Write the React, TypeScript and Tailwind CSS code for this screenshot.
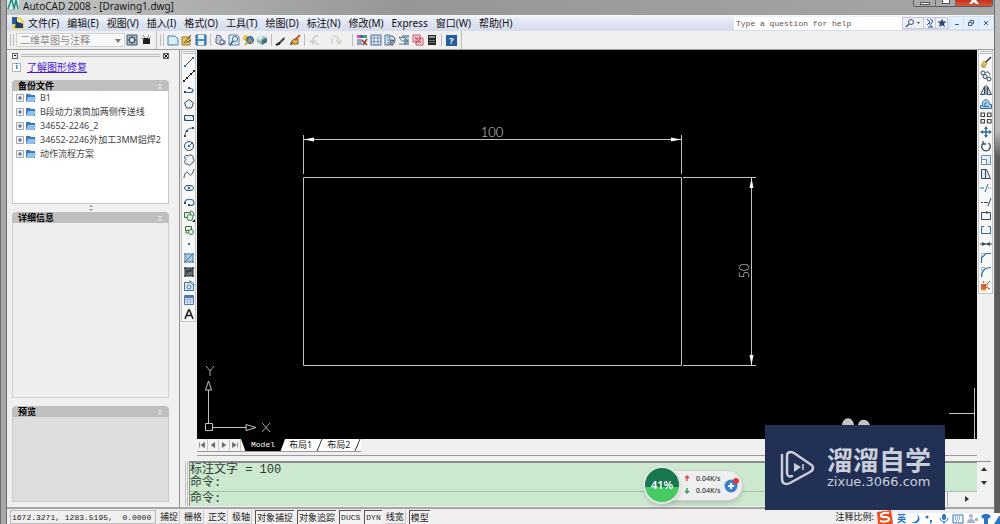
import type { ReactNode } from 'react'

type Tool = { name: string; icon: ReactNode }

const blue = '#2f6d9e'
const navy = '#34495e'

const menus = [
  '文件(F)',
  '编辑(E)',
  '视图(V)',
  '插入(I)',
  '格式(O)',
  '工具(T)',
  '绘图(D)',
  '标注(N)',
  '修改(M)',
  'Express',
  '窗口(W)',
  '帮助(H)',
]

const backups = ['B1', 'B段动力滚筒加两侧传送线', '34652-2246_2', '34652-2246外加工3MM鋁焊2', '动作流程方案']

const modes = [
  { label: '捕捉', on: false },
  { label: '栅格', on: false },
  { label: '正交', on: false },
  { label: '极轴', on: false },
  { label: '对象捕捉', on: true },
  { label: '对象追踪', on: true },
  { label: 'DUCS', on: true },
  { label: 'DYN', on: true },
  { label: '线宽', on: false },
  { label: '模型', on: true },
]

const fileTools: Tool[] = [
  {
    name: 'New',
    icon: <path d="M1 2h7l3 3v6H1z" fill="#d9ecf8" stroke="#4d86ad" />,
  },
  {
    name: 'Open',
    icon: (
      <>
        <path d="M1 3h8v8H1z" fill="#e8c766" stroke="#9b7a2c" />
        <path d="M3 9l7-8M5 9l5-3" stroke="#5b4a20" />
      </>
    ),
  },
  {
    name: 'Save',
    icon: (
      <>
        <path d="M1 1h10v10H1z" fill="#4f8fc4" stroke="#2d618f" />
        <path d="M3 1h6v4H3zM3 7h6v4H3z" fill="#e8f2fa" />
      </>
    ),
  },
]

const printTools: Tool[] = [
  {
    name: 'Plot',
    icon: (
      <>
        <path d="M3 1l4 1v3l4 2v3l-4 1-5-2V5z" fill="#c9cfda" stroke="#5f6f8c" />
        <circle cx="8" cy="8" r="2" fill="#fff" stroke="#4b628c" />
      </>
    ),
  },
  {
    name: 'Plot Preview',
    icon: (
      <>
        <path d="M1 1h8l2 2v8H1z" fill="#dcebf6" stroke="#5b84a5" />
        <circle cx="7" cy="5" r="2.5" fill="#fff" stroke="#35608a" />
        <path d="M5 7l-3 4" stroke="#35608a" strokeWidth="1.5" />
      </>
    ),
  },
  {
    name: 'Publish',
    icon: (
      <>
        <circle cx="4" cy="4" r="3" fill="#edc53c" />
        <circle cx="8" cy="6" r="3.5" fill="#4c89c7" stroke="#275584" />
        <path d="M3 11l5-5 2 3" stroke="#c69121" strokeWidth="1.5" />
      </>
    ),
  },
  {
    name: '3D DWF',
    icon: (
      <>
        <path d="M6 1l5 3v4l-5 3-5-3V4z" fill="#8fb7ae" />
        <path d="M6 6l5-2v4l-5 3z" fill="#3f7280" />
        <path d="M1 4l5-3 2 1-4 5z" fill="#d9e7ee" />
      </>
    ),
  },
]

const editTools: Tool[] = [
  {
    name: 'Match Properties',
    icon: (
      <>
        <path d="M2 10l7-7 1 2-6 6z" fill="#4d4d42" />
        <path d="M1 11l4-2" stroke="#222" strokeWidth="2" />
      </>
    ),
  },
  {
    name: 'Block Editor',
    icon: (
      <>
        <path d="M5 5h4v5H2V8z" fill="#e4b544" stroke="#806126" />
        <path d="M6 6l5-5" stroke="#c4572b" strokeWidth="2" />
        <path d="M1 11l3-3" stroke="#3d3d3d" />
      </>
    ),
  },
]

const undoTools: Tool[] = [
  {
    name: 'Undo',
    icon: <path d="M9 2C6 1 4 3 4 8M1 6l3 4 3-4M7 10h3" stroke="#cfcec2" strokeWidth="1.5" />,
  },
  {
    name: 'Redo',
    icon: <path d="M2 2c4 0 6 2 6 6M5 6l3 4 3-4M1 4v6" stroke="#d3d2c8" strokeWidth="1.5" />,
  },
]

const paletteTools: Tool[] = [
  {
    name: 'Properties',
    icon: (
      <>
        <path d="M1 1h3v3H1z" fill="#d64fa8" />
        <path d="M4 1h3v3H4z" fill="#4262c9" />
        <path d="M7 1h4v3H7z" fill="#3fa468" />
        <path d="M1 5h5v6H1z" fill="#9ca4b5" />
        <path d="M6 6l5 5M11 5l-4 6" stroke="#9a3737" strokeWidth="1.5" />
      </>
    ),
  },
  {
    name: 'DesignCenter',
    icon: (
      <>
        <path d="M1 1h10v10H1z" fill="#dce8f1" stroke="#48729b" />
        <path d="M4 1v10M8 1v10M1 4h10M1 7.500h10" stroke="#7c9dba" />
      </>
    ),
  },
  {
    name: 'Tool Palettes',
    icon: (
      <>
        <path d="M1 1h5v10H1z" fill="#dce8f4" stroke="#4c6e96" />
        <path d="M3 3h2M3 6h2M3 9h2" stroke="#4c6e96" />
        <path d="M7 2c3 0 4 2 4 5M7 6h2v5H7zM9 6l2 3" stroke="#2e4867" />
      </>
    ),
  },
  {
    name: 'Sheet Set Manager',
    icon: (
      <>
        <path d="M4 1h7v3H4zM6 5h5v6H6z" fill="#8ba4bb" />
        <path d="M1 3l6 1 3 3H4zM1 10h8" stroke="#5a7893" />
      </>
    ),
  },
  {
    name: 'Markup Set Manager',
    icon: (
      <>
        <path d="M1 1h7v7H1zM4 4h7v7H4z" fill="#f5d5da" stroke="#c75667" />
        <path d="M3 3l6 6M9 4L4 9" stroke="#b3414f" />
      </>
    ),
  },
  {
    name: 'QuickCalc',
    icon: (
      <>
        <path d="M2 1h8v10H2z" fill="#262626" />
        <path d="M3 2h6v2H3z" fill="#8c9b9b" />
        <path d="M4 6v4M6 6v4M8 6v4" stroke="#b4b4b4" strokeDasharray="1 1" />
      </>
    ),
  },
]

const drawTools: Tool[] = [
  {
    name: 'Line',
    icon: (
      <>
        <path d="M2 10l8-8" stroke={navy} />
        <path d="M1 9h2v2H1zM9 1h2v2H9z" fill={blue} />
      </>
    ),
  },
  {
    name: 'Construction Line',
    icon: (
      <>
        <path d="M1 11L11 1" stroke="#222" />
        <path d="M3 7h2v2H3zM7 3h2v2H7zM0 10h2v2H0zM10 0h2v2h-2z" fill="#222" />
      </>
    ),
  },
  {
    name: 'Polyline',
    icon: (
      <>
        <path d="M1 8.500h6c4 0 4-4 0-4" stroke={blue} strokeWidth="1.200" />
        <path d="M1 7h2v2H1zM5 3h2v2H5z" fill={navy} />
      </>
    ),
  },
  { name: 'Polygon', icon: <path d="M6 1.500l4.500 3.500-2 5h-5l-2-5z" fill="#eaf3f8" stroke={navy} /> },
  {
    name: 'Rectangle',
    icon: (
      <>
        <path d="M1.500 3.500h9v5h-9z" fill="#e6eff6" stroke={navy} />
        <path d="M1 7h2v2H1zM9 3h2v2H9z" fill={blue} />
      </>
    ),
  },
  {
    name: 'Arc',
    icon: (
      <>
        <path d="M2 10c0-5 3-8 8-8" stroke={blue} />
        <path d="M1 9h2v2H1zM3 4h2v2H3zM9 1h2v2H9z" fill={navy} />
      </>
    ),
  },
  {
    name: 'Circle',
    icon: (
      <>
        <circle cx="6" cy="6" r="4.5" fill="#eff6fa" stroke={navy} />
        <path d="M6 6l3-3" stroke={blue} />
        <path d="M5 5h2v2H5zM8 2h2v2H8z" fill={blue} />
      </>
    ),
  },
  {
    name: 'Revision Cloud',
    icon: (
      <path
        d="M3 5.500C0 4 2 0 5 2c2-2 6-1 5 2.500 2 2 1 4-1 4 0 3-4 3-4 1.500-4 1-4-3-2-4.500z"
        fill="#f1f6f9"
        stroke={navy}
      />
    ),
  },
  { name: 'Spline', icon: <path d="M1 10c1-8 4-6 5-4s3 2 5-5" stroke={navy} /> },
  {
    name: 'Ellipse',
    icon: (
      <>
        <ellipse cx="6" cy="6" rx="4.5" ry="2.5" fill="#dcecf5" stroke={navy} />
        <path d="M5 5h2v2H5zM1 5h1v2H1zM10 5h1v2h-1z" fill={blue} />
      </>
    ),
  },
  {
    name: 'Ellipse Arc',
    icon: (
      <>
        <path d="M2 7c-1-5 9-5 9 0 0 2-2 3-5 2" stroke={blue} strokeWidth="1.200" />
        <path d="M1 6h2v2H1zM5 8h2v2H5z" fill={navy} />
      </>
    ),
  },
  {
    name: 'Insert Block',
    icon: (
      <>
        <path d="M1.500 2.500h6v5h-6z" fill="#dff0dc" stroke="#387443" />
        <circle cx="7" cy="7.500" r="3" fill="#e5f2e1" stroke="#387443" />
        <path d="M7 1c3 0 4 2 4 5" stroke="#2f6485" />
        <path d="M12 9v3H9z" fill="#222" />
      </>
    ),
  },
  {
    name: 'Make Block',
    icon: (
      <>
        <path d="M2.500 2.500h6v4h-6z" fill="#e6f2e2" stroke="#387443" />
        <circle cx="8" cy="8" r="2.5" fill="#eef5ea" stroke="#387443" />
        <path d="M3 6v3h2" stroke="#387443" />
      </>
    ),
  },
  { name: 'Point', icon: <path d="M5 5h2v2H5z" fill={blue} /> },
  {
    name: 'Hatch',
    icon: (
      <>
        <path d="M2 2h8v8H2z" fill="#a9cbe6" />
        <path d="M2 1v10M10 1v10M1 2h10M1 10h10M3 9l6-6" stroke="#4376a0" />
      </>
    ),
  },
  {
    name: 'Gradient',
    icon: (
      <>
        <path d="M2 2h8v8H2z" fill="#68717b" />
        <path d="M2 1v10M10 1v10M1 2h10M1 10h10M3 5h6M3 8l5-5" stroke="#23282d" />
      </>
    ),
  },
  {
    name: 'Region',
    icon: (
      <>
        <path d="M1.500 2.500h6l3 3v5h-9z" fill="#dcebf6" stroke="#4376a0" />
        <circle cx="6" cy="7" r="2" fill="#fff" stroke="#4376a0" />
        <path d="M6 1c3 0 5 2 5 5" stroke="#4376a0" />
      </>
    ),
  },
  {
    name: 'Table',
    icon: (
      <>
        <path d="M1.500 1.500h9v9h-9z" fill="#e5ecfa" stroke="#5475ba" />
        <path d="M2 3h8" stroke="#5475ba" strokeWidth="2" />
        <path d="M2 5.500h8M2 8h8M4.500 4v6M7.500 4v6" stroke="#9db3e0" />
      </>
    ),
  },
  { name: 'Multiline Text', icon: <path d="M2 11l3.5-9h1L10 11M4 7.5h4" stroke="#222" strokeWidth="1.6" /> },
]

const modifyTools: Tool[] = [
  {
    name: 'Erase',
    icon: (
      <>
        <path d="M5 7l6-6" stroke="#333" strokeWidth="1.5" />
        <path d="M4 5l3 3-3 2H1z" fill="#e3ca50" stroke="#b59a3a" />
        <path d="M2 11h4" stroke="#c2602e" />
      </>
    ),
  },
  {
    name: 'Copy',
    icon: (
      <>
        <circle cx="3" cy="3" r="2" stroke={navy} />
        <path d="M5 3c2-2 5-1 5 2" stroke={navy} />
        <circle cx="5" cy="6.500" r="2" fill="#eef4f8" stroke={navy} />
        <circle cx="9" cy="9" r="2" fill="#eef4f8" stroke={navy} />
      </>
    ),
  },
  { name: 'Mirror', icon: <path d="M4.500 2.500v8h-4zM7.500 2.500v8h4zM6 1v10" fill="#cfe0ec" stroke={navy} /> },
  {
    name: 'Offset',
    icon: (
      <>
        <path d="M.500 10.500v-3h2c-1-7 7-8 7-1h2v4z" fill="#b4d1e7" stroke={blue} />
        <path d="M3 8.500h6M5 8V5h2" stroke={blue} />
      </>
    ),
  },
  {
    name: 'Array',
    icon: (
      <path
        d="M1 1h3.500v3.500H1zM7.500 1H11v3.500H7.500zM1 7.500h3.500V11H1zM7.500 7.500H11V11H7.500z"
        stroke="#444"
        strokeWidth="1.200"
      />
    ),
  },
  {
    name: 'Move',
    icon: (
      <>
        <path d="M6 2v8M2 6h8" stroke={blue} strokeWidth="1.5" />
        <path d="M6 0l2 3H4zM6 12l2-3H4zM0 6l3-2v4zM12 6L9 4v4z" fill={blue} />
      </>
    ),
  },
  {
    name: 'Rotate',
    icon: <path d="M3.500 3a4.300 4.300 0 1 0 5 0M3 1v3h3" stroke={navy} strokeWidth="1.300" />,
  },
  {
    name: 'Scale',
    icon: (
      <>
        <path d="M1.500 1.500h9v9h-9z" fill="#e3eef6" stroke="#688ba8" />
        <path d="M1.500 5.500h5v5h-5z" fill="#fff" stroke="#688ba8" />
      </>
    ),
  },
  { name: 'Stretch', icon: <path d="M1.500 1.500h4v9h-4zM5.500 1.500h1l4 9h-5z" fill="#e3ebf1" stroke={navy} /> },
  { name: 'Trim', icon: <path d="M0 6h4M5 10l3-8M8 6h1M10 6h1" stroke={blue} /> },
  { name: 'Extend', icon: <path d="M1 6.500h2M4 6.500h4M8 10l3-8" stroke={navy} /> },
  { name: 'Break at Point', icon: <path d="M1.500 2.500h9v7h-9zM7 1v3" fill="#f1f5f8" stroke={navy} /> },
  { name: 'Break', icon: <path d="M4 2.500H1.500v7h9v-7H8" fill="#f1f5f8" stroke={blue} /> },
  {
    name: 'Join',
    icon: (
      <>
        <path d="M0 6h12" stroke={navy} />
        <path d="M2 4l4 2-4 2zM10 4L6 6l4 2z" fill={navy} />
      </>
    ),
  },
  {
    name: 'Chamfer',
    icon: (
      <>
        <path d="M1.500 5V1.500H5" stroke="#9bb2c4" />
        <path d="M1.500 11V6L6 1.500h5" stroke={blue} strokeWidth="1.200" />
      </>
    ),
  },
  {
    name: 'Fillet',
    icon: (
      <>
        <path d="M1.500 5V1.500H5" stroke="#9bb2c4" />
        <path d="M1.500 11c0-6 3-9.500 9.500-9.500" stroke={blue} strokeWidth="1.200" />
      </>
    ),
  },
  {
    name: 'Explode',
    icon: (
      <>
        <path d="M1 4h5v6H1z" fill="#d96237" />
        <path d="M5 6l5-5M6 7l4 2M3 3l1-2" stroke="#8b4a2b" />
        <path d="M6 4h2v2H6zM2 9h3v2H2z" fill="#f0b13d" />
      </>
    ),
  },
]

function Glyph({ children }: { children: ReactNode }) {
  return (
    <svg viewBox="0 0 12 12" className="size-3 shrink-0" fill="none" aria-hidden="true">
      {children}
    </svg>
  )
}

function ToolGroup({ tools }: { tools: Tool[] }) {
  return (
    <div className="flex items-center gap-[2px] border-r border-[#bdbdbd] px-[3px]">
      {tools.map((t) => (
        <button key={t.name} aria-label={t.name} className="flex">
          <Glyph>{t.icon}</Glyph>
        </button>
      ))}
    </div>
  )
}

function SideBar({ tools }: { tools: Tool[] }) {
  return (
    <div className="w-[17px] shrink-0 bg-[#f0f0f0] px-px">
      <div className="flex flex-col items-center border-x border-b border-[#c4c4c4] bg-[#f8f8f8] pt-px">
        <span className="mb-px h-[3px] w-3 border-y border-[#b8b8b8]" />
        {tools.map((t) => (
          <button key={t.name} aria-label={t.name} className="flex h-[14px] items-center">
            <Glyph>{t.icon}</Glyph>
          </button>
        ))}
      </div>
    </div>
  )
}

function Grip() {
  return <span className="my-[3px] w-[4px] shrink-0 border-x border-[#bdbdbd]" />
}

function PanelHeader({ title }: { title: string }) {
  return (
    <div className="flex h-[11px] shrink-0 items-center justify-between rounded-t-[4px] bg-[#bfbfbf] px-[6px]">
      <h2 className="text-[9px] leading-[11px] font-bold text-black">{title}</h2>
      <svg viewBox="0 0 6 6" className="size-[6px]" fill="none" stroke="#f4f4f4" aria-hidden="true">
        <path d="M1 3l2-2 2 2M1 6l2-2 2 2" />
      </svg>
    </div>
  )
}

function TitleBar() {
  return (
    <header className="flex h-[15px] shrink-0 items-start bg-linear-to-r from-[#c3c7c5] via-[#969696] via-40% to-[#a6a6a6]">
      <svg viewBox="0 0 12 10" className="h-[10px] w-3" aria-hidden="true">
        <path d="M0 0h12v9H0z" fill="#d7efea" />
        <path d="M1 9l3-9h1l2 9M7 9L9 0l2 9" fill="none" stroke="#268c83" strokeWidth="1.5" />
      </svg>
      <h1 className="ml-1 text-[10px] leading-3 text-[#161616]">AutoCAD 2008 - [Drawing1.dwg]</h1>
      <div className="mr-px ml-auto flex h-[7px] overflow-hidden rounded-b-[3px] border border-t-0 border-[#5b5b5b]">
        <button aria-label="Minimize" className="flex w-[22px] items-center justify-center border-r border-[#6a6a6a] bg-[#a9a9a9]">
          <span className="h-[3px] w-[10px] border border-[#555] bg-white" />
        </button>
        <button aria-label="Restore" className="flex w-5 items-start justify-center border-r border-[#6a6a6a] bg-[#a9a9a9]">
          <span className="h-1 w-2 border border-t-0 border-[#555] bg-white" />
        </button>
        <button aria-label="Close" className="flex w-9 justify-center bg-linear-to-b from-[#c2331e] to-[#d9543d]">
          <svg viewBox="0 0 10 5" className="h-[5px] w-[10px]" aria-hidden="true">
            <path d="M3 0h4l3 4H7L5 2 3 4H0z" fill="#fff" />
          </svg>
        </button>
      </div>
    </header>
  )
}

function MenuBar() {
  return (
    <nav className="flex h-4 shrink-0 items-center bg-linear-to-b from-[#f4f6fb] via-[#dfe4f2] to-[#d6dcee]">
      <svg viewBox="0 0 12 12" className="ml-[5px] size-3" aria-hidden="true">
        <path d="M0 0h8l4 4v8H0z" fill="#f1d05c" />
        <path d="M0 0h5v7H0z" fill="#2a5c96" />
        <path d="M4 4l7 3v4H3z" fill="#1f3e69" />
        <path d="M5 2l4 2-2 2z" fill="#fff" />
      </svg>
      <div className="ml-1 flex gap-2">
        {menus.map((m) => (
          <button key={m} className="text-[10px] leading-4 whitespace-nowrap text-[#111]">
            {m}
          </button>
        ))}
      </div>
      <input
        aria-label="Help search"
        placeholder="Type a question for help"
        className="ml-auto h-[13px] w-[168px] bg-white px-[2px] pt-px font-['Liberation_Mono',monospace] text-[8px] leading-3 outline-none placeholder:text-[#555]"
      />
      <div className="flex items-center bg-[#eef0f6]">
        <button aria-label="Search" className="flex w-[22px] items-center justify-center border border-[#c5cad8]">
          <svg viewBox="0 0 16 10" className="h-[10px] w-4" fill="none" aria-hidden="true">
            <circle cx="6" cy="4" r="2.500" fill="#e8f0fb" stroke="#3a4f86" />
            <path d="M4 6L1 9" stroke="#3a4f86" strokeWidth="1.500" />
            <path d="M12 4h3l-1.500 2z" fill="#444" />
          </svg>
        </button>
        <button aria-label="Communication Center" className="flex w-3 justify-center border border-l-0 border-[#c5cad8]">
          <svg viewBox="0 0 10 10" className="size-[10px]" fill="none" stroke="#33508f" aria-hidden="true">
            <path d="M2 1l3 3-3 3M5 1l3 2-2 3M4 5l3 4M3 9h5" />
          </svg>
        </button>
        <button aria-label="Favorites" className="flex w-3 justify-center border border-l-0 border-[#c5cad8]">
          <svg viewBox="0 0 10 10" className="size-[10px]" aria-hidden="true">
            <path d="M5 .500l1.200 3H9.500L7 5.700 8 9 5 7.200 2 9l1-3.300L.500 3.500h3.300z" fill="#2c4278" />
          </svg>
        </button>
      </div>
      <div className="ml-px flex text-[#3c5f88]">
        <button aria-label="Minimize drawing" className="flex h-[14px] w-[15px] items-center justify-center border border-[#d0e0f0] bg-[#e3f0fb]">
          <span className="mt-[3px] h-px w-1 bg-current" />
        </button>
        <button aria-label="Restore drawing" className="flex h-[14px] w-[15px] items-center justify-center border border-l-0 border-[#d0e0f0] bg-[#e3f0fb]">
          <svg viewBox="0 0 6 6" className="size-[6px]" fill="none" stroke="currentColor" aria-hidden="true">
            <path d="M2 2V.500h3.500v3H4M.500 2.500H4v3H.500z" />
          </svg>
        </button>
        <button aria-label="Close drawing" className="flex h-[14px] w-[15px] items-center justify-center border border-l-0 border-[#d0e0f0] bg-[#e3f0fb]">
          <svg viewBox="0 0 6 6" className="size-[6px]" fill="none" stroke="currentColor" aria-hidden="true">
            <path d="M1 1l4 4M5 1L1 5" />
          </svg>
        </button>
      </div>
    </nav>
  )
}

function Toolbar() {
  return (
    <div className="flex h-[19px] shrink-0 border-b border-[#9c9c9c] bg-[#f0f0f0]">
      <div className="flex border-r border-[#bdbdbd] pr-1 pl-[3px]">
        <Grip />
        <div className="relative my-[2px] ml-[2px] flex w-[109px] border border-[#d2d2d2] bg-[#f7f7f7]">
          <select
            aria-label="Workspace"
            className="w-full appearance-none pl-[3px] text-[10px] leading-3 text-[#8a8a8a] outline-none"
          >
            <option>二维草图与注释</option>
          </select>
          <svg viewBox="0 0 6 4" className="pointer-events-none absolute top-[5px] right-[3px] h-1 w-[6px]" aria-hidden="true">
            <path d="M0 0h6L3 4z" fill="#777" />
          </svg>
        </div>
        <div className="flex items-center gap-[2px] pl-[1px]">
          <button aria-label="Workspace settings" className="flex">
            <Glyph>
              <path d="M1 1h10v10H1z" fill="#a9c0cc" stroke="#3d5a68" />
              <circle cx="6" cy="6" r="2.500" fill="#eef4f6" stroke="#2b434f" />
              <path d="M6 2v2M6 8v2M2 6h2M8 6h2M3 3l1 1M9 3L8 4M3 9l1-1M9 9L8 8" stroke="#2b434f" />
            </Glyph>
          </button>
          <button aria-label="My workspace" className="flex">
            <Glyph>
              <path d="M3 4h7v6H3z" fill="#1f1f1f" />
              <path d="M3 1l2 3M9 1L7 4M1 4l3 1M11 3L8 5" stroke="#888" />
            </Glyph>
          </button>
        </div>
      </div>
      <div className="flex border-r border-[#bdbdbd] pl-[3px]">
        <Grip />
        <div className="my-[3px] flex">
          <ToolGroup tools={fileTools} />
          <ToolGroup tools={printTools} />
          <ToolGroup tools={editTools} />
          <div className="flex items-center gap-[10px] border-r border-[#bdbdbd] pr-[9px] pl-1">
            {undoTools.map((t) => (
              <button key={t.name} aria-label={t.name} className="flex" disabled>
                <Glyph>{t.icon}</Glyph>
              </button>
            ))}
          </div>
          <ToolGroup tools={paletteTools} />
          <button aria-label="Help" className="mx-1 flex items-center">
            <span className="flex size-[11px] items-center justify-center bg-[#245c9c] text-[9px] leading-none font-bold text-white">
              ?
            </span>
          </button>
        </div>
      </div>
    </div>
  )
}

function RecoveryPalette() {
  return (
    <aside className="flex w-[173px] shrink-0 flex-col border-r border-[#8f8f8f] bg-[#f0f0f0] pr-[10px] pb-[5px] pl-[5px]">
      <div className="flex h-[11px] shrink-0 items-center gap-[3px]">
        <button aria-label="Collapse" className="flex size-[6px] items-center justify-center border border-[#666]">
          <span className="h-px w-[2px] bg-black" />
        </button>
        <span className="h-[3px] flex-1 border-y border-[#bcbcbc]" />
        <button aria-label="Close palette" className="flex size-[6px] items-center justify-center border border-[#666]">
          <svg viewBox="0 0 4 4" className="size-1" stroke="#000" aria-hidden="true">
            <path d="M0 0l4 4M4 0L0 4" />
          </svg>
        </button>
      </div>
      <div className="mb-[7px] flex h-3 shrink-0 items-center gap-[6px]">
        <span className="flex size-[9px] items-center justify-center border border-[#a9b8c2] bg-white font-['Liberation_Serif',serif] text-[8px] leading-none font-bold text-[#2c6f9b]">
          i
        </span>
        <a href="#recovery" className="text-[10px] leading-3 text-[#4a16d0] underline">
          了解图形修复
        </a>
      </div>
      <section className="flex h-[124px] shrink-0 flex-col">
        <PanelHeader title="备份文件" />
        <ul className="flex-1 overflow-hidden border border-t-0 border-[#c8c8c8] bg-white pl-[3px]">
          {backups.map((name) => (
            <li key={name} className="flex h-[14px] items-center text-[9px] text-[#444]">
              <button aria-label={`Expand ${name}`} className="mr-[2px] flex shrink-0">
                <svg viewBox="0 0 8 8" className="size-2" fill="none" aria-hidden="true">
                  <path d="M.500.500h7v7h-7z" fill="#f6f6f6" stroke="#a8a8a8" />
                  <path d="M2 4h4M4 2v4" stroke="#3d558c" />
                </svg>
              </button>
              <svg viewBox="0 0 10 10" className="mr-1 h-[10px] w-[10px] shrink-0" aria-hidden="true">
                <path d="M0 1h4l1 1h4v7H0z" fill="#3f79b6" />
                <path d="M2 4h8L8 9H0z" fill="#8fc0ea" />
              </svg>
              <span className="whitespace-nowrap">{name}</span>
            </li>
          ))}
        </ul>
      </section>
      <div className="flex h-2 shrink-0 items-center justify-center">
        <svg viewBox="0 0 4 6" className="h-[6px] w-1" fill="#999" aria-hidden="true">
          <path d="M2 0l2 2H0zM2 6l2-2H0z" />
        </svg>
      </div>
      <section className="flex min-h-0 flex-1 flex-col">
        <PanelHeader title="详细信息" />
        <div className="flex-1 border border-t-0 border-[#cfcfcf] bg-[#eeeeee]" />
      </section>
      <section className="mt-2 flex h-24 shrink-0 flex-col">
        <PanelHeader title="预览" />
        <div className="flex-1 border border-t-0 border-[#cacaca] bg-[#dddddd]" />
      </section>
    </aside>
  )
}

function Drawing() {
  return (
    <svg
      className="min-h-0 w-full flex-1 bg-black font-['Lato',sans-serif] text-[13px] font-light"
      fill="none"
      stroke="#c4c4c4"
      role="img"
      aria-label="100 x 50 rectangle"
    >
      <path d="M106.500 127.500h378v188h-378z" />
      {/* dimension lines */}
      <path d="M106.500 85v39M484.500 85v39M106.500 89.500h378" />
      <path d="M486 127.500h73M486 315.500h73M554.500 127.500v188" />
      <g fill="#fff" stroke="none">
        <path d="M107 89.500l10-2v4zM484 89.500l-10-2v4zM554.500 128l-2 10h4zM554.500 315l-2-10h4z" />
      </g>
      <g fill="#d6d6d6" stroke="none" textAnchor="middle">
        <text x="295" y="87">
          100
        </text>
        <text x="0" y="0" transform="translate(552 221) rotate(-90)">
          50
        </text>
      </g>
      {/* UCS icon */}
      <path d="M8.500 373.500h7v7h-7zM11.500 373v-33M16 377.500h33M11.500 331l-3 9h6zM59 377.500l-10-3v6z" />
      <path d="M9 316l4 5 4-5M13 321v5M65 373l8 9M73 373l-8 9" stroke="#aaa" />
      {/* cursor */}
      <path d="M752 363.500h26M777.500 338v60" />
    </svg>
  )
}

function LayoutTabs() {
  return (
    <div className="flex h-[17px] shrink-0 items-start border-b border-[#9c9c9c] bg-[#f0f0f0]">
      <div className="flex h-[13px] items-center border-b border-[#999] bg-white">
        {['M2 2v6M8 2v6L4 5z', 'M7 2v6L3 5z', 'M3 2v6l4-3z', 'M2 2v6l4-3zM8 2v6'].map((d, i) => (
          <button
            key={d}
            aria-label={['First layout', 'Previous layout', 'Next layout', 'Last layout'][i]}
            className="flex h-full w-[11px] items-center justify-center border-r border-[#c9c9c9] bg-[#f3f3f3]"
          >
            <svg viewBox="0 0 10 10" className="size-2" fill="#666" stroke="#666" aria-hidden="true">
              <path d={d} />
            </svg>
          </button>
        ))}
        <button className="h-full bg-black px-[10px] font-['Liberation_Mono',monospace] text-[8px] leading-3 text-white [clip-path:polygon(0_0,100%_0,90%_100%,10%_100%)]">
          Model
        </button>
        {['布局1', '布局2'].map((tab) => (
          <button key={tab} className="flex h-full items-center pl-1 text-[9px] leading-3 text-[#222]">
            {tab}
            <svg viewBox="0 0 7 12" className="ml-1 h-3 w-[7px]" stroke="#333" aria-hidden="true">
              <path d="M1 12L6 0" />
            </svg>
          </button>
        ))}
      </div>
    </div>
  )
}

function CommandLine() {
  return (
    <div className="flex h-[51px] shrink-0 bg-[#f0f0f0] pt-[5px] pr-[3px] pb-px pl-[5px]">
      <span className="mr-px w-[3px] border-x border-[#c0c0c0]" />
      <div className="flex min-w-0 flex-1 flex-col border-t-2 border-l border-[#8c8c8c] bg-[#cce8cf] font-['Liberation_Mono','Noto_Sans_CJK_SC',monospace] text-[12px] text-[#2f3a31]">
        <div className="flex-1 pt-px leading-[13px]">
          <p>标注文字 = 100</p>
          <p>命令:</p>
        </div>
        <div className="flex h-[15px] items-center border-t border-[#a9bfab]">
          <label htmlFor="command" className="leading-[13px]">
            命令:
          </label>
          <input id="command" className="min-w-0 flex-1 bg-transparent outline-none" />
          <div className="flex h-full w-[60px] items-center justify-between border-l border-[#bbb] bg-[#f1f1f1] pr-2">
            <span className="h-full w-[30px] border-r border-[#aaa]" />
            <svg viewBox="0 0 4 6" className="h-[6px] w-1" fill="#333" aria-hidden="true">
              <path d="M0 0l4 3-4 3z" />
            </svg>
          </div>
        </div>
      </div>
      <div className="flex w-[14px] flex-col items-center gap-[10px] border-t border-[#8c8c8c] bg-[#f1f1f1] pt-[5px]">
        <svg viewBox="0 0 6 4" className="h-1 w-[6px]" fill="#333" aria-hidden="true">
          <path d="M0 4h6L3 0z" />
        </svg>
        <svg viewBox="0 0 6 4" className="h-1 w-[6px]" fill="#333" aria-hidden="true">
          <path d="M0 0h6L3 4z" />
        </svg>
      </div>
    </div>
  )
}

function StatusBar() {
  return (
    <footer className="flex h-[17px] shrink-0 items-start border-t-2 border-[#a6a6a6] bg-[#f0eeee] pt-px pl-[3px] text-[9px] text-[#222]">
      <span className="h-[14px] w-[146px] border border-[#bbb] pl-px font-['Liberation_Mono',monospace] text-[8px] leading-[13px] whitespace-pre">
        {'1672.3271, 1283.5195,  0.0000'}
      </span>
      <div className="ml-[3px] flex gap-[3px]">
        {modes.map((m) => {
          const isLatin = m.label.startsWith('D')
          return (
            <button
              key={m.label}
              aria-pressed={m.on}
              className={`h-[14px] px-px leading-[13px] whitespace-nowrap ${
                m.on ? 'border-t border-l border-[#555] bg-[#f4f2f2]' : 'border-r border-b border-[#ccc]'
              } ${isLatin ? "font-['Liberation_Mono',monospace] text-[8px]" : ''}`}
            >
              {m.label}
            </button>
          )
        })}
      </div>
      <span className="mr-[120px] ml-auto leading-[14px] whitespace-nowrap">注释比例:</span>
    </footer>
  )
}

function SpeedBall() {
  return (
    <div className="absolute right-[257px] bottom-[20px] flex h-[38px] items-center">
      <div className="z-10 flex size-[38px] items-center justify-center rounded-full border-2 border-[#dfe5e0] bg-linear-to-b from-[#17784f] from-55% to-[#45cb62] to-55% text-[11px] font-semibold text-white shadow-md">
        41%
      </div>
      <div className="-ml-4 flex h-[31px] items-center rounded-r-full border border-[#cfcfcf] bg-[#efefef] pr-[2px] pl-[18px] shadow-md">
        <svg viewBox="0 0 6 20" className="h-5 w-[6px]" fill="none" strokeWidth="1.500" aria-hidden="true">
          <path d="M3 6V1M1 3l2-2 2 2" stroke="#d9534f" />
          <path d="M3 13v5M1 16l2 2 2-2" stroke="#3b9a5c" />
        </svg>
        <div className="mr-1 ml-[6px] w-6 text-[7px] leading-3 font-medium whitespace-nowrap text-[#333]">
          <p>0.04K/s</p>
          <p>0.04K/s</p>
        </div>
        <svg viewBox="0 0 16 16" className="size-4" aria-hidden="true">
          <circle cx="7" cy="9" r="6.500" fill="#3a80d0" />
          <path d="M7 6v6M4 9h6" stroke="#fff" strokeWidth="2" />
          <circle cx="12" cy="4" r="3" fill="#e03b3b" />
        </svg>
      </div>
    </div>
  )
}

function Watermark() {
  return (
    <div className="absolute right-[55px] bottom-[14px] z-20">
      <svg viewBox="0 0 28 7" className="absolute bottom-full left-[77px] h-[7px] w-7" fill="#c4c4c4" aria-hidden="true">
        <path d="M0 7c1-9 11-9 12 0zM16 7c1-7 10-7 12 0z" />
      </svg>
      <div className="flex h-[85px] w-[180px] items-center gap-3 bg-[#223055] pl-[14px] text-[#c9ced9]">
        <svg viewBox="0 0 36 38" className="h-[38px] w-9 shrink-0" fill="none" stroke="currentColor" strokeWidth="2.500" aria-hidden="true">
          <path d="M3 6v24c0 5 4 6 8 4l20-11c4-2 4-6 0-8L15 4c-4-2-7-1-7 3v17c0 3 2 4 5 3" strokeLinecap="round" />
          <path d="M15 14l7 4-7 5z" fill="currentColor" stroke="none" />
          <path d="M24 15v6" strokeWidth="1.500" />
        </svg>
        <div>
          <p className="text-[26px] leading-7 font-bold whitespace-nowrap">溜溜自学</p>
          <p className="font-['DejaVu_Sans',sans-serif] text-[13px] leading-4 whitespace-nowrap">zixue.3066.com</p>
        </div>
      </div>
    </div>
  )
}

function InputMethodBar() {
  return (
    <div className="absolute right-0 bottom-0 z-30 flex h-[14px] items-end">
      <svg viewBox="0 0 17 14" className="h-[14px] w-[17px]" aria-hidden="true">
        <path d="M1 2l14-2 2 14H2z" fill="#ea4e24" />
        <path d="M13 3C8 2 4 4 5 6s8 0 8 3-5 3-9 2" fill="none" stroke="#fff" strokeWidth="2" />
      </svg>
      <div className="flex h-[11px] w-[107px] items-center gap-1 bg-white pl-1 text-[9px] leading-[11px] font-bold text-[#2a74c5]">
        <span>英</span>
        <svg viewBox="0 0 90 11" className="h-[11px] w-[90px] shrink-0" fill="#2a74c5" aria-hidden="true">
          <path d="M7 1c3 6-2 9-6 8 6 4 12-2 6-8z" />
          <circle cx="17" cy="4" r="1.500" />
          <path d="M20 7h2v2l-2 2z" />
          <rect x="32" y="1" width="4" height="6" rx="2" />
          <path d="M30 5c0 5 8 5 8 0M34 9v2" fill="none" stroke="#2a74c5" />
          <path d="M43 2h10v8H43z" fill="none" stroke="#2a74c5" />
          <path d="M45 4h6M45 6h6M46 8h4" stroke="#2a74c5" strokeDasharray="1 1" />
          <g fill="#a9b6c5">
            <circle cx="61" cy="3" r="2" />
            <path d="M57 10c0-6 8-6 8 0zM65 5h3v3h-3z" />
          </g>
          <path d="M71 3l3-2h4l3 2-2 3-1-1v6h-4V5l-1 1z" />
          <path d="M84 11l5-8h1v8z" />
        </svg>
      </div>
    </div>
  )
}

export default function App() {
  return (
    <div className="relative flex h-screen overflow-hidden bg-[#8f8f8f] font-['Noto_Sans','Noto_Sans_CJK_SC',sans-serif]">
      <div className="w-[7px] shrink-0 border-x border-[#6c6c6c] bg-[#a8a8a8]" />
      <div className="flex min-w-0 flex-1 flex-col">
        <TitleBar />
        <MenuBar />
        <Toolbar />
        <main className="flex min-h-0 flex-1">
          <RecoveryPalette />
          <div className="flex min-w-0 flex-1 flex-col">
            <div className="flex min-h-0 flex-1">
              <SideBar tools={drawTools} />
              <div className="flex min-w-0 flex-1 flex-col">
                <Drawing />
                <LayoutTabs />
              </div>
              <SideBar tools={modifyTools} />
            </div>
            <CommandLine />
          </div>
        </main>
        <StatusBar />
      </div>
      <div className="w-[6px] shrink-0 border-l border-[#707070] bg-linear-to-b from-[#b9b9b9] from-25% to-[#5c5c5c] to-30%" />
      <SpeedBall />
      <Watermark />
      <InputMethodBar />
    </div>
  )
}
